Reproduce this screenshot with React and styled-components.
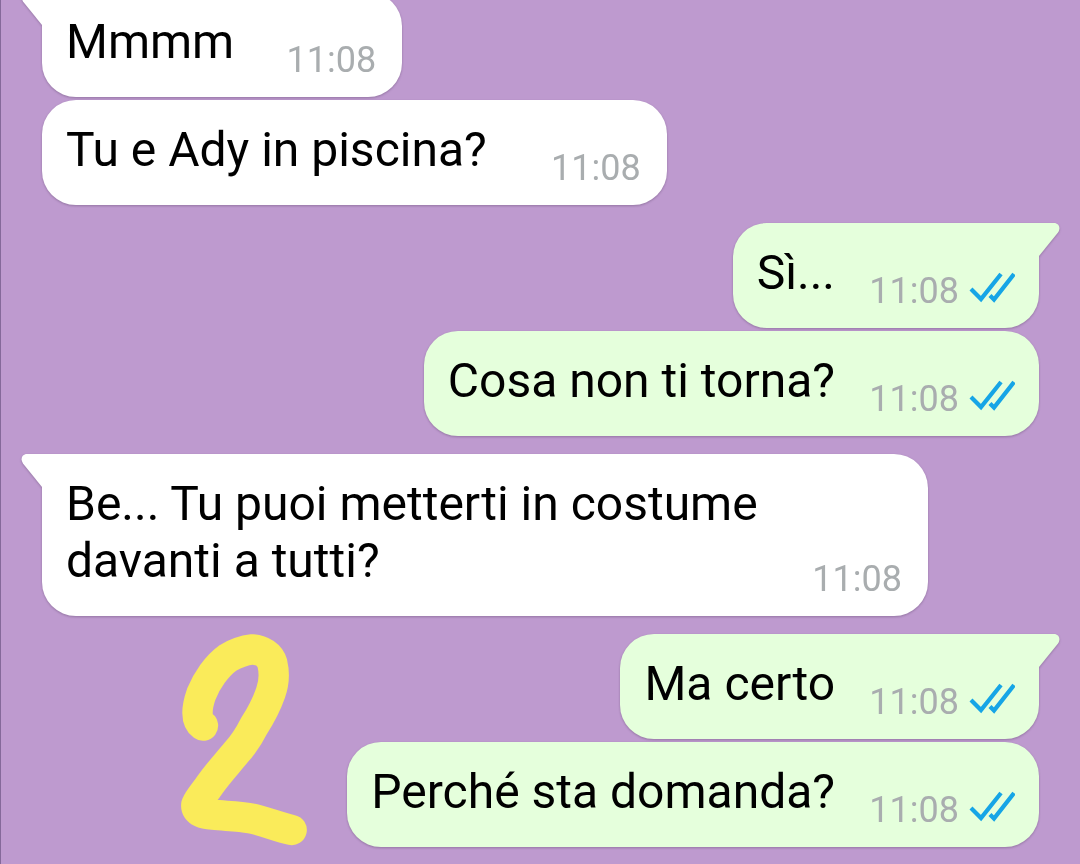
import React from "react";
import styled, { createGlobalStyle } from "styled-components";

const GlobalStyle = createGlobalStyle`
  * {
    box-sizing: border-box;
  }

  body {
    margin: 0;
    background-color: #be9acf;
    font-family: Roboto, "Noto Sans", sans-serif;
  }
`;

const Chat = styled.main`
  position: relative;
  min-height: 100vh;
  overflow: hidden;
  border-left: 1px solid #85699a;
  background-color: #be9acf;
`;

// scrolled a little, the first bubble is cut by the top edge
const Thread = styled.div`
  display: flex;
  flex-direction: column;
  gap: 18px;
  margin-top: -8px;
  padding: 0 41px 16px;
`;

const Group = styled.section`
  display: flex;
  flex-direction: column;
  align-items: ${(props) => (props.$sent ? "flex-end" : "flex-start")};
  gap: 3px;
`;

const Bubble = styled.article`
  position: relative;
  display: grid;
  max-width: calc(100% - 111px);
  padding: 21px ${(props) => (props.$sent ? 24 : 26)}px 16px 24px;
  border-radius: 34px;
  border-top-left-radius: ${(props) => (props.$tail && !props.$sent ? 0 : 34)}px;
  border-top-right-radius: ${(props) => (props.$tail && props.$sent ? 0 : 34)}px;
  background-color: ${(props) => (props.$sent ? "#e5ffdc" : "#fff")};
  color: ${(props) => (props.$sent ? "#e5ffdc" : "#fff")};
  filter: drop-shadow(0 1px 1px rgba(70, 50, 80, 0.35));
`;

const TailIcon = styled.svg`
  position: absolute;
  top: 0;
  ${(props) => (props.$sent ? "left: 100%;" : "right: 100%;")}
  margin: 0 -1px;
  transform: ${(props) => (props.$sent ? "scaleX(-1)" : "none")};
`;

const Text = styled.p`
  grid-area: 1 / 1;
  margin: 0;
  padding-bottom: 11px;
  color: #000;
  font-size: 48px;
  line-height: 57px;
`;

// keeps the end of the last line clear of the time
const Spacer = styled.span`
  display: inline-block;
  width: ${(props) => (props.$sent ? 180 : 142)}px;
`;

const Meta = styled.div`
  grid-area: 1 / 1;
  place-self: end;
  display: flex;
  align-items: center;
  gap: 10px;
`;

const Time = styled.time`
  color: #a9adaf;
  font-size: 36px;
  line-height: 42px;
`;

const TicksIcon = styled.svg`
  margin-bottom: 6px;
`;

const Doodle = styled.svg`
  position: absolute;
  top: 620px;
  left: 159px;
`;

const groups = [
  { id: 1, sent: false, messages: ["Mmmm", "Tu e Ady in piscina?\u00a0"] },
  { id: 2, sent: true, messages: ["Sì...", "Cosa non ti torna?"] },
  {
    id: 3,
    sent: false,
    messages: ["Be... Tu puoi metterti in costume davanti a tutti?"],
  },
  { id: 4, sent: true, messages: ["Ma certo", "Perché sta domanda?"] },
];

const Tail = ({ sent }) => (
  <TailIcon $sent={sent} width="22" height="34" viewBox="0 0 22 34" aria-hidden="true">
    <path d="M22 0H6C1 0 -1 5 2 9.500L21 33H22Z" fill="currentColor" />
  </TailIcon>
);

const ReadTicks = () => (
  <TicksIcon width="46" height="32" viewBox="0 0 46 32" role="img" aria-label="Letto">
    <g fill="none" stroke="#16a5e6" strokeWidth="4.2">
      <path d="M2 17L12 27L32 2" />
      <path d="M21 23.500L25 27.500L45 2" />
    </g>
  </TicksIcon>
);

const Message = ({ text, sent, tail }) => {
  return (
    <Bubble $sent={sent} $tail={tail}>
      {tail && <Tail sent={sent} />}
      <Text>
        {text}
        <Spacer $sent={sent} />
      </Text>
      <Meta>
        <Time dateTime="11:08">11:08</Time>
        {sent && <ReadTicks />}
      </Meta>
    </Bubble>
  );
};

const App = () => {
  return (
    <Chat>
      <GlobalStyle />
      <Thread>
        {groups.map((group) => (
          <Group key={group.id} $sent={group.sent}>
            {group.messages.map((text, index) => (
              <Message key={text} text={text} sent={group.sent} tail={index === 0} />
            ))}
          </Group>
        ))}
      </Thread>
      <Doodle width="170" height="244" viewBox="0 0 510 732" aria-hidden="true">
        <path
          d="M129 317C106 300 110 262 124 222C140 182 170 138 205 113C230 98 252 91 277 88C306 90 330 106 337 130C344 160 342 190 332 218C318 258 300 290 282 318C266 350 248 376 228 398C200 432 172 462 150 494C134 518 118 534 109 554C106 576 134 582 158 584C196 588 236 588 272 595C316 604 350 620 395 630"
          fill="none"
          stroke="#faeb5a"
          strokeWidth="91"
          strokeLinecap="round"
          strokeLinejoin="round"
        />
      </Doodle>
    </Chat>
  );
};

export default App;
